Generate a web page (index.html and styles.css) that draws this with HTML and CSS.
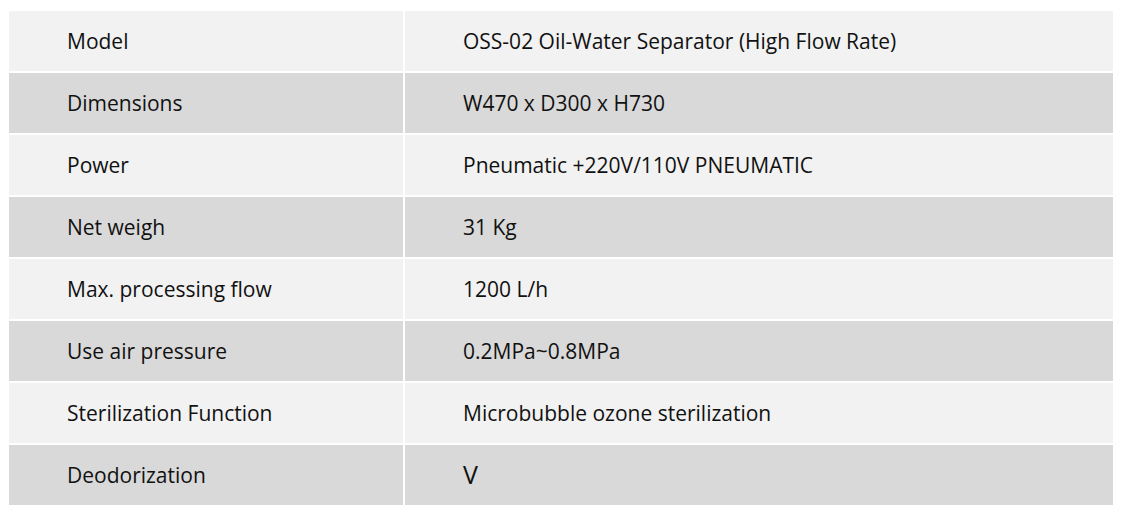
FILE: index.html
```html
<!DOCTYPE html>
<html>
<head>
<meta charset="utf-8">
<link rel="stylesheet" href="styles.css">
</head>
<body>
<div class="spec">
  <div class="cell light key">Model</div><div class="cell light val">OSS-02 Oil-Water Separator (High Flow Rate)</div>
  <div class="cell dark key">Dimensions</div><div class="cell dark val">W470 x D300 x H730</div>
  <div class="cell light key">Power</div><div class="cell light val">Pneumatic +220V/110V PNEUMATIC</div>
  <div class="cell dark key">Net weigh</div><div class="cell dark val">31 Kg</div>
  <div class="cell light key">Max. processing flow</div><div class="cell light val">1200 L/h</div>
  <div class="cell dark key">Use air pressure</div><div class="cell dark val">0.2MPa~0.8MPa</div>
  <div class="cell light key">Sterilization Function</div><div class="cell light val">Microbubble ozone sterilization</div>
  <div class="cell dark key">Deodorization</div><div class="cell dark val"><span class="big">V</span></div>
</div>
</body>
</html>
```

FILE: styles.css
```css
html, body {
  margin: 0;
  padding: 0;
  background: #ffffff;
}
body {
  padding: 11px 9px 0 9px;
  font-family: "Open Sans", "Noto Sans", sans-serif;
  color: #111111;
}
.spec {
  width: 1104px;
  display: grid;
  grid-template-columns: 394px 708px;
  grid-auto-rows: 60px;
  column-gap: 2px;
  row-gap: 2px;
}
.cell {
  display: flex;
  align-items: center;
  padding-left: 58px;
  font-size: 21px;
}
.light { background: #f2f2f2; }
.dark { background: #d9d9d9; }
.big {
  font-size: 25px;
  font-weight: 400;
  padding-bottom: 2px;
}
```
